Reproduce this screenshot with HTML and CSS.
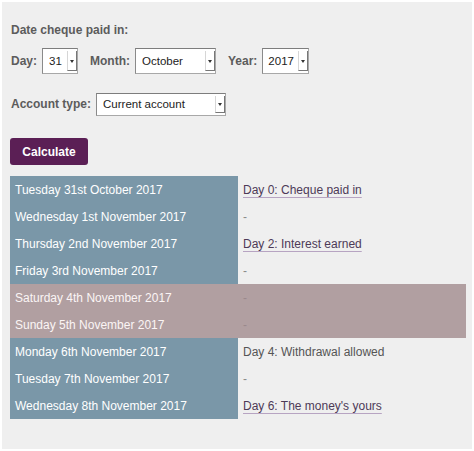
FILE: index.html
```html
<!DOCTYPE html>
<html>
<head>
<meta charset="utf-8">
<link rel="stylesheet" href="styles.css">
</head>
<body>
<div class="panel">
  <div class="heading">Date cheque paid in:</div>
  <div class="date-row">
    <label class="lbl">Day:</label>
    <span class="sel sel-day"><select><option>31</option></select><span class="arrow"></span></span>
    <label class="lbl">Month:</label>
    <span class="sel sel-month"><select><option>October</option></select><span class="arrow"></span></span>
    <label class="lbl">Year:</label>
    <span class="sel sel-year"><select><option>2017</option></select><span class="arrow"></span></span>
  </div>
  <div class="acct-row">
    <label class="lbl">Account type:</label>
    <span class="sel sel-acct"><select><option>Current account</option></select><span class="arrow"></span></span>
  </div>
  <button class="calc">Calculate</button>
  <div class="table">
    <div class="row"><div class="date">Tuesday 31st October 2017</div><div class="info"><a class="link">Day 0: Cheque paid in</a></div></div>
    <div class="row"><div class="date">Wednesday 1st November 2017</div><div class="info dash">-</div></div>
    <div class="row"><div class="date">Thursday 2nd November 2017</div><div class="info"><a class="link">Day 2: Interest earned</a></div></div>
    <div class="row"><div class="date">Friday 3rd November 2017</div><div class="info dash">-</div></div>
    <div class="row weekend"><div class="date">Saturday 4th November 2017</div><div class="info dash">-</div></div>
    <div class="row weekend"><div class="date">Sunday 5th November 2017</div><div class="info dash">-</div></div>
    <div class="row"><div class="date">Monday 6th November 2017</div><div class="info plain">Day 4: Withdrawal allowed</div></div>
    <div class="row"><div class="date">Tuesday 7th November 2017</div><div class="info dash">-</div></div>
    <div class="row"><div class="date">Wednesday 8th November 2017</div><div class="info"><a class="link">Day 6: The money's yours</a></div></div>
  </div>
</div>
</body>
</html>
```
FILE: styles.css
```css
html, body {
  margin: 0;
  padding: 0;
  background: #ffffff;
}
body {
  font-family: "Liberation Sans", Arial, sans-serif;
  font-size: 12px;
  color: #555555;
}
.panel {
  margin: 2px 2px 2px 2px;
  width: 470px;
  height: 447px;
  background: #efefef;
  box-sizing: border-box;
  padding: 21px 0 0 9px;
}
.heading {
  font-weight: bold;
  font-size: 12px;
  color: #5c5c5c;
  line-height: 14px;
}
.lbl {
  font-weight: bold;
  color: #5c5c5c;
  font-size: 12px;
}
.date-row {
  display: flex;
  align-items: center;
  margin-top: 10px;
  height: 28px;
}
.date-row .lbl { margin-right: 5px; }
.date-row .sel { margin-right: 12px; }
.acct-row {
  display: flex;
  align-items: center;
  margin-top: 17px;
  height: 24px;
}
.acct-row .lbl { margin-right: 5px; }
.sel {
  position: relative;
  display: inline-block;
  height: 26px;
}
.sel select {
  appearance: none;
  -webkit-appearance: none;
  height: 100%;
  width: 100%;
  border: 1px solid #a8a8a8;
  border-top-color: #7d7d7d;
  border-left-color: #8a8a8a;
  border-radius: 0;
  background: #ffffff;
  font-family: "Liberation Sans", Arial, sans-serif;
  font-size: 11.5px;
  color: #222222;
  padding: 0 0 0 6px;
  box-sizing: border-box;
}
.sel .arrow {
  position: absolute;
  right: 1px;
  top: 3px;
  bottom: 3px;
  width: 8px;
  border-left: 1px solid #d6d6d6;
  border-right: 1px solid #777;
  border-bottom: 1px solid #777;
  background: #ffffff;
}
.sel .arrow::after {
  content: "";
  position: absolute;
  left: 2px;
  top: 50%;
  margin-top: -1px;
  border-left: 2px solid transparent;
  border-right: 2px solid transparent;
  border-top: 3px solid #333;
}
.sel-day { width: 36px; }
.sel-month { width: 81px; }
.sel-year { width: 47px; }
.sel-year select { padding-left: 5px; }
.sel-acct { width: 130px; height: 23px; }
.calc {
  display: block;
  margin-top: 22px;
  width: 78px;
  height: 27px;
  margin-left: -1px;
  background: #5b1f55;
  color: #ffffff;
  border: none;
  border-radius: 3px;
  font-family: "Liberation Sans", Arial, sans-serif;
  font-weight: bold;
  font-size: 12px;
  padding: 0;
}
.table {
  margin-top: 11px;
  margin-left: -1px;
  width: 456px;
}
.row {
  display: flex;
  height: 27px;
  align-items: center;
}
.date {
  width: 228px;
  height: 100%;
  background: #7a97a8;
  color: #ffffff;
  box-sizing: border-box;
  padding-left: 5px;
  display: flex;
  align-items: center;
}
.info {
  padding-left: 5px;
  flex: 1;
}
.weekend { background: #b19fa1; }
.weekend .date { background: #b19fa1; color: #fbf5f5; }
.link {
  color: #4d3a57;
  text-decoration: underline;
  text-decoration-color: #b7a4c2;
  text-underline-offset: 3px;
}
.dash { color: #8a8a8a; }
.weekend .dash { color: #9a898c; }
.plain { color: #555555; }
```
